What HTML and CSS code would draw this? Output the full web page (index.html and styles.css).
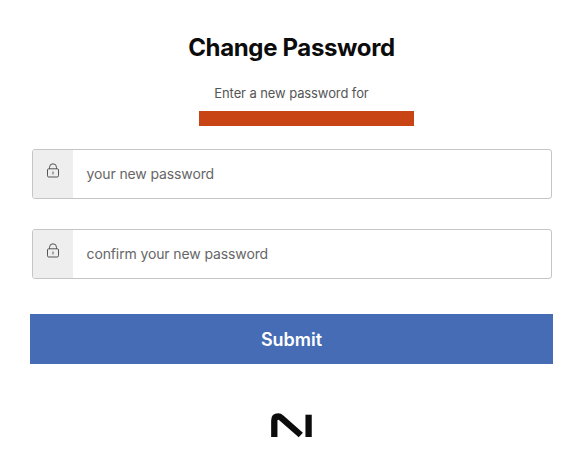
FILE: index.html
```html
<!DOCTYPE html>
<html lang="en">
<head>
<meta charset="utf-8">
<title>Change Password</title>
<link rel="stylesheet" href="styles.css">
</head>
<body>
<main class="panel">
  <h1 class="title">Change Password</h1>
  <p class="intro">Enter a new password for</p>
  <div class="account"></div>
  <form class="form">
    <label class="field">
      <span class="addon">
        <svg class="lock" viewBox="0 0 12 15"><path d="M2.5 6V4.3a3.5 3.5 0 0 1 7 0V6"/><rect x=".5" y="5.8" width="11" height="8.2" rx="1.2"/><path class="keyhole" d="M6 8.5v3"/></svg>
      </span>
      <span class="placeholder first">your new password</span>
    </label>
    <label class="field">
      <span class="addon">
        <svg class="lock" viewBox="0 0 12 15"><path d="M2.5 6V4.3a3.5 3.5 0 0 1 7 0V6"/><rect x=".5" y="5.8" width="11" height="8.2" rx="1.2"/><path class="keyhole" d="M6 8.5v3"/></svg>
      </span>
      <span class="placeholder second">confirm your new password</span>
    </label>
    <button class="submit" type="button">Submit</button>
  </form>
  <svg class="logo" viewBox="0 0 42 25"><path d="M3.3 24V7.5Q3.3 3.5 7.3 3.5Q8.8 3.5 10.3 4.8L29.8 22" /><path d="M37.6 1.7v22.3"/></svg>
</main>
</body>
</html>
```
FILE: styles.css
```css
* { box-sizing: border-box; }
body {
  margin: 0;
  background: #fff;
  color: #0c0c0c;
  font-family: Inter, "Liberation Sans", sans-serif;
}
.panel {
  width: 523px;
  margin-left: 30px;
  padding-top: 33px;
  display: flex;
  flex-direction: column;
  align-items: center;
}
.title {
  margin: 0;
  font-size: 24px;
  line-height: 30px;
  font-weight: 700;
  letter-spacing: -0.35px;
  white-space: nowrap;
}
.intro {
  margin: 21px 0 0;
  font-size: 13px;
  line-height: 18px;
  letter-spacing: -0.1px;
  color: #555;
  white-space: nowrap;
}
.account {
  width: 215px;
  height: 15px;
  margin: 9px 0 0 30px;
  background: #c94415;
}
.form {
  width: 100%;
  margin-top: 23px;
}
.field {
  display: flex;
  height: 50px;
  margin: 0 1px 30px 2px;
  border: 1px solid #c5c5c5;
  border-radius: 3px;
  overflow: hidden;
}
.addon {
  width: 40px;
  background: #eee;
  display: flex;
  justify-content: center;
  padding-top: 13px;
}
.lock {
  width: 12px;
  height: 15px;
  fill: none;
  stroke: #555;
  stroke-width: 1;
}
.keyhole { stroke: #888; stroke-width: 1.4; }
.placeholder {
  margin-left: 13.5px;
  font-size: 14px;
  line-height: 48px;
  letter-spacing: -0.12px;
  color: #666;
  white-space: nowrap;
}
.submit {
  display: block;
  width: 100%;
  height: 50px;
  margin-top: 35px;
  padding: 2px 0 0;
  border: 0;
  background: #456cb5;
  color: #fff;
  font: 600 18px/48px Inter, "Liberation Sans", sans-serif;
}
.logo {
  width: 42px;
  height: 25px;
  margin-top: 49px;
  fill: none;
  stroke: #0c0c0c;
  stroke-width: 6.3;
}
```
